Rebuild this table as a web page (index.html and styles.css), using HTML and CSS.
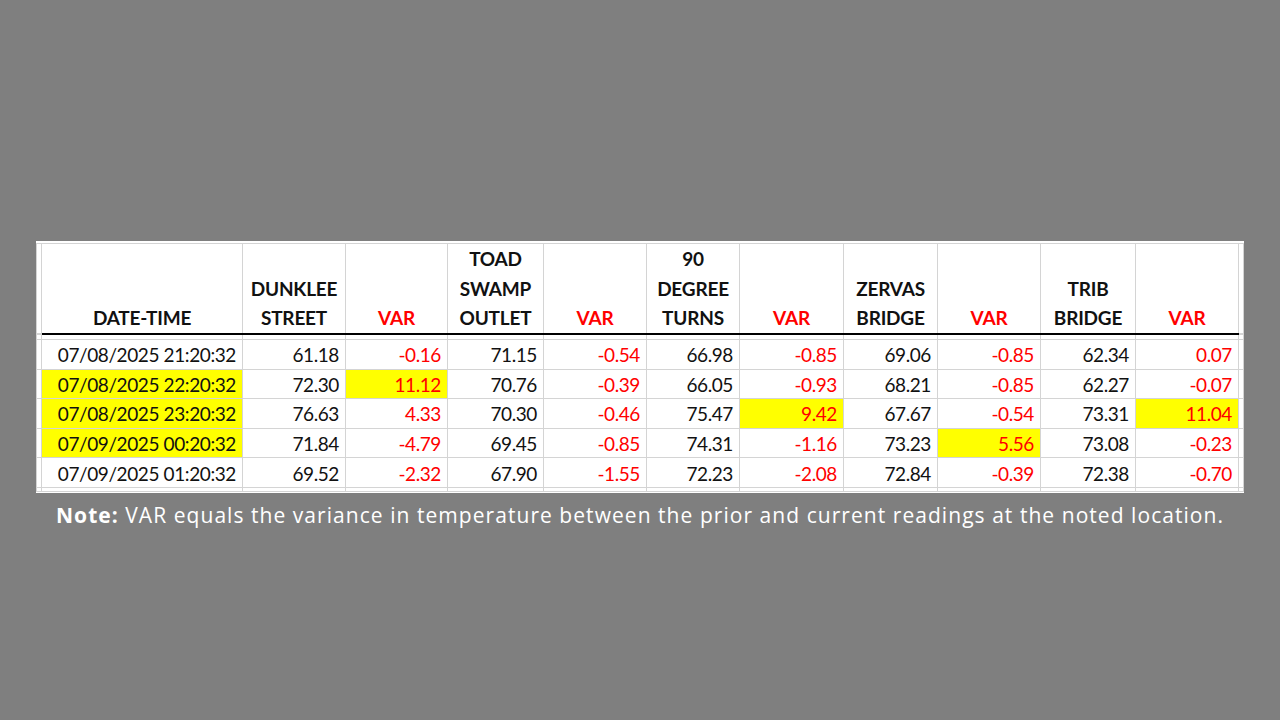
FILE: index.html
```html
<!DOCTYPE html>
<html>
<head>
<meta charset="utf-8">
<link rel="stylesheet" href="styles.css">
</head>
<body>
<div class="slide">
  <div class="sheet">
    <table class="grid">
      <colgroup>
        <col class="c-edge">
        <col class="c-date">
        <col class="c-103"><col class="c-102">
        <col class="c-96"><col class="c-103">
        <col class="c-93"><col class="c-104">
        <col class="c-94"><col class="c-103">
        <col class="c-95"><col class="c-103">
        <col class="c-edge">
      </colgroup>
      <thead>
        <tr class="head">
          <th></th>
          <th>DATE-TIME</th>
          <th>DUNKLEE<br>STREET</th>
          <th class="red">VAR</th>
          <th>TOAD<br>SWAMP<br>OUTLET</th>
          <th class="red">VAR</th>
          <th>90<br>DEGREE<br>TURNS</th>
          <th class="red">VAR</th>
          <th>ZERVAS<br>BRIDGE</th>
          <th class="red">VAR</th>
          <th>TRIB<br>BRIDGE</th>
          <th class="red">VAR</th>
          <th></th>
        </tr>
      </thead>
      <tbody>
        <tr class="spacer"><td></td><td></td><td></td><td></td><td></td><td></td><td></td><td></td><td></td><td></td><td></td><td></td><td></td></tr>
        <tr class="row">
          <td></td><td>07/08/2025 21:20:32</td>
          <td>61.18</td><td class="red">-0.16</td>
          <td>71.15</td><td class="red">-0.54</td>
          <td>66.98</td><td class="red">-0.85</td>
          <td>69.06</td><td class="red">-0.85</td>
          <td>62.34</td><td class="red">0.07</td><td></td>
        </tr>
        <tr class="row">
          <td></td><td class="hl">07/08/2025 22:20:32</td>
          <td>72.30</td><td class="red hl">11.12</td>
          <td>70.76</td><td class="red">-0.39</td>
          <td>66.05</td><td class="red">-0.93</td>
          <td>68.21</td><td class="red">-0.85</td>
          <td>62.27</td><td class="red">-0.07</td><td></td>
        </tr>
        <tr class="row">
          <td></td><td class="hl">07/08/2025 23:20:32</td>
          <td>76.63</td><td class="red">4.33</td>
          <td>70.30</td><td class="red">-0.46</td>
          <td>75.47</td><td class="red hl">9.42</td>
          <td>67.67</td><td class="red">-0.54</td>
          <td>73.31</td><td class="red hl">11.04</td><td></td>
        </tr>
        <tr class="row">
          <td></td><td class="hl">07/09/2025 00:20:32</td>
          <td>71.84</td><td class="red">-4.79</td>
          <td>69.45</td><td class="red">-0.85</td>
          <td>74.31</td><td class="red">-1.16</td>
          <td>73.23</td><td class="red hl">5.56</td>
          <td>73.08</td><td class="red">-0.23</td><td></td>
        </tr>
        <tr class="row">
          <td></td><td>07/09/2025 01:20:32</td>
          <td>69.52</td><td class="red">-2.32</td>
          <td>67.90</td><td class="red">-1.55</td>
          <td>72.23</td><td class="red">-2.08</td>
          <td>72.84</td><td class="red">-0.39</td>
          <td>72.38</td><td class="red">-0.70</td><td></td>
        </tr>
        <tr class="tail"><td></td><td></td><td></td><td></td><td></td><td></td><td></td><td></td><td></td><td></td><td></td><td></td><td></td></tr>
      </tbody>
    </table>
  </div>
  <p class="note"><b>Note:</b> VAR equals the variance in temperature between the prior and current readings at the noted location.</p>
</div>
</body>
</html>
```

FILE: styles.css
```css
* { box-sizing: border-box; }
html, body { margin: 0; padding: 0; }
body { background: #7f7f7f; }

.slide {
  width: 1280px;
  height: 720px;
  background: #7f7f7f;
  padding-top: 241px;
  display: flex;
  flex-direction: column;
}

.sheet {
  margin-left: 36px;
  width: 1208px;
  height: 252px;
  background: #ffffff;
  overflow: hidden;
  padding-top: 2px;
}

.grid {
  border-collapse: collapse;
  table-layout: fixed;
  width: 1208px;
  font-family: Lato, "Liberation Sans", sans-serif;
  color: #111;
}

.c-edge { width: 5px; }
.c-date { width: 201px; }
.c-103 { width: 103px; }
.c-102 { width: 102px; }
.c-104 { width: 104px; }
.c-96 { width: 96px; }
.c-95 { width: 95px; }
.c-94 { width: 94px; }
.c-93 { width: 93px; }

.grid th, .grid td {
  border: 1px solid #d4d4d4;
  padding: 0;
  overflow: hidden;
  white-space: nowrap;
}

.head th {
  height: 89px;
  vertical-align: bottom;
  text-align: center;
  font-weight: 700;
  font-size: 19px;
  line-height: 29.5px;
  letter-spacing: -0.2px;
  border-bottom: 2px solid #000;
  padding-bottom: 0;
}
.head th:first-child, .head th:last-child { border-bottom-color: #d4d4d4; }

.spacer td { height: 6px; }

.row td {
  height: 29.6px;
  font-size: 19px;
  letter-spacing: -0.4px;
  text-align: right;
  padding-right: 6px;
  padding-top: 2px;
  vertical-align: middle;
  line-height: 26px;
}
.row td:first-child, .row td:last-child { padding: 0; }

.tail td { height: 4px; }

.red { color: #ff0000; }
.hl { background: #ffff00; }

.note {
  margin: 8px 0 0 0;
  text-align: center;
  color: #ffffff;
  font-family: "Open Sans", "Noto Sans", sans-serif;
  font-size: 21px;
  letter-spacing: 1.05px;
  line-height: 28px;
}
.note b { font-weight: 700; }
```
